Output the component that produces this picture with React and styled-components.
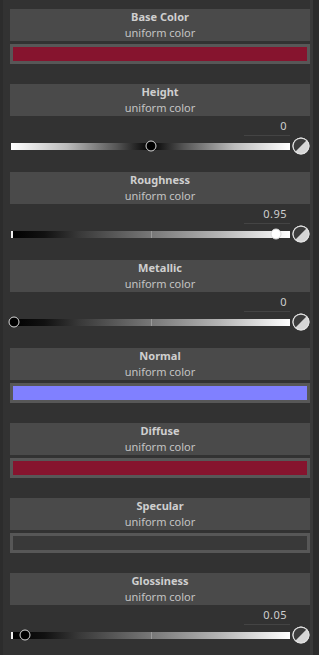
import React from "react";
import styled, { createGlobalStyle } from "styled-components";

const GlobalStyle = createGlobalStyle`
  html, body {
    margin: 0;
    padding: 0;
    background: #2c2c2c;
  }
  body {
    font-family: "Noto Sans", "Open Sans", sans-serif;
  }
`

const Panel = styled.div`
  width: 310px;
  min-height: 655px;
  box-sizing: border-box;
  margin-left: 3px;
  padding: 9px 0 0 7px;
  background: #323232;
  border-right: 3px solid #3a3a3a;
  display: flex;
  flex-direction: column;
`

const Section = styled.div`
  width: 300px;
  display: flex;
  flex-direction: column;
  margin-bottom: ${p => p.$gap}px;
`

const Header = styled.div`
  height: 32px;
  background: #4a4a4a;
  display: flex;
  flex-direction: column;
  align-items: center;
  justify-content: center;
  color: #cfcfcf;
  font-size: 11px;
  line-height: 16px;
`

const Title = styled.span`
  font-weight: bold;
`

const Sub = styled.span`
  color: #c4c4c4;
`

const Swatch = styled.div`
  margin-top: 3px;
  height: 20px;
  box-sizing: border-box;
  border: 3px solid #575757;
  background: ${p => p.$color};
`

const SliderArea = styled.div`
  height: 56px;
  display: flex;
  flex-direction: column;
`

const ValueRow = styled.div`
  height: 20px;
  display: flex;
  justify-content: flex-end;
  padding-right: 20px;
`

const Value = styled.div`
  width: 46px;
  box-sizing: border-box;
  padding-right: 3px;
  text-align: right;
  font-size: 11px;
  line-height: 20px;
  color: #cfcfcf;
  border-bottom: 1px solid #444;
  letter-spacing: 0.5px;
`

const SliderRow = styled.div`
  height: 18px;
  margin-top: 1px;
  display: flex;
  align-items: center;
  gap: 2px;
  padding-left: 1px;
`

const Track = styled.div`
  position: relative;
  width: 280px;
  height: 7px;
  background: ${p => p.$bipolar
    ? "linear-gradient(to right, #fff 0%, #bbb 20%, #555 38%, #000 50%, #555 62%, #bbb 80%, #fff 100%)"
    : "linear-gradient(to right, #000 0%, #111 12%, #3a3a3a 25%, #777 50%, #b5b5b5 75%, #fff 100%)"};
`

const Tick = styled.div`
  position: absolute;
  left: 50%;
  top: 0;
  width: 1px;
  height: 7px;
  background: #9a9a9a;
`

const EndMark = styled.div`
  position: absolute;
  left: 0;
  top: 0;
  width: 2px;
  height: 7px;
  background: #eee;
`

const Knob = styled.div`
  position: absolute;
  top: 50%;
  width: 11px;
  height: 11px;
  box-sizing: border-box;
  border-radius: 50%;
  border: 1.5px solid #d8d8d8;
  background: ${p => p.$fill};
  transform: translate(-50%, -50%);
`

function ResetIcon() {
  return (
    <svg width="18" height="18" viewBox="0 0 18 18">
      <circle cx="9" cy="9" r="8" fill="#d6d6d6" stroke="#e4e4e4" strokeWidth="1" />
      <path d="M3.3 14.7 A8 8 0 0 1 14.7 3.3 Z" fill="#3c3c3c" />
      <circle cx="9" cy="9" r="8" fill="none" stroke="#e0e0e0" strokeWidth="1.2" />
    </svg>
  )
}

function ColorSection({ title, color }) {
  return (
    <Section $gap={20}>
      <Header>
        <Title>{title}</Title>
        <Sub>uniform color</Sub>
      </Header>
      <Swatch $color={color} />
    </Section>
  )
}

function SliderSection({ title, value, pos, bipolar }) {
  const knobFill = bipolar ? "#000" : pos > 0.5 ? "#fff" : "#000";
  return (
    <Section $gap={0}>
      <Header>
        <Title>{title}</Title>
        <Sub>uniform color</Sub>
      </Header>
      <SliderArea>
        <ValueRow>
          <Value>{value}</Value>
        </ValueRow>
        <SliderRow>
          <Track $bipolar={bipolar}>
            {!bipolar && <Tick />}
            {!bipolar && <EndMark />}
            <Knob $fill={knobFill} style={{ left: `${pos * 100}%` }} />
          </Track>
          <ResetIcon />
        </SliderRow>
      </SliderArea>
    </Section>
  )
}

export default function App() {
  return (
    <>
      <GlobalStyle />
      <Panel>
        <ColorSection title="Base Color" color="#86142e" />
        <SliderSection title="Height" value="0" pos={0.5} bipolar />
        <SliderSection title="Roughness" value="0.95" pos={0.95} />
        <SliderSection title="Metallic" value="0" pos={0.01} />
        <ColorSection title="Normal" color="#8080ff" />
        <ColorSection title="Diffuse" color="#86142e" />
        <ColorSection title="Specular" color="#393939" />
        <SliderSection title="Glossiness" value="0.05" pos={0.05} />
      </Panel>
    </>
  )
}
